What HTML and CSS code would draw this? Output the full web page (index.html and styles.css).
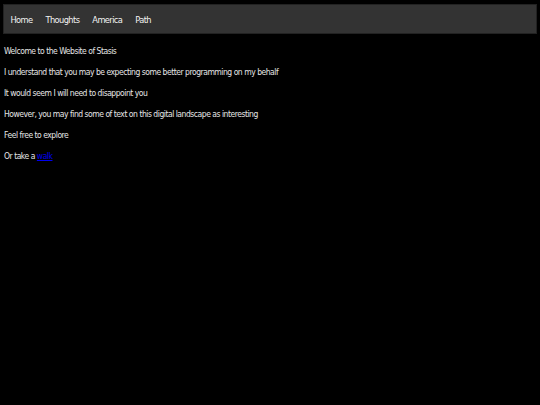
FILE: index.html
```html
<!DOCTYPE html>
<html lang="en">
<head>
    <meta charset="UTF-8">
    <meta name="viewport" content="width=device-width, initial-scale=1.0">
    <title>Stasis</title>
    <link rel="stylesheet" href="styles.css">
</head>
<body>
    <!-- Навигация -->
    <nav class="topnav">
        <a href="#">Home</a>
        <a href="#">Thoughts</a>
        <a href="#">America</a>
        <a href="#">Path</a>
    </nav>

    <div class="content">
        <p>Welcome to the Website of Stasis</p>
        <p>I understand that you may be expecting some better programming on my behalf</p>
        <p>It would seem I will need to disappoint you</p>
        <p>However, you may find some of text on this digital landscape as interesting</p>
        <p>Feel free to explore</p>
        <p>Or take a <a href="#" class="walk">walk</a></p>
    </div>
</body>
</html>
```

FILE: styles.css
```css
body {
    margin: 0;
    padding: 4px 3px;
    background-color: #000;
    color: #e6e6e6;
    font-family: 'DejaVu Sans Condensed', 'DejaVu Sans', sans-serif;
    font-size: 8.5px;
    letter-spacing: -0.48px;
}

.topnav {
    display: flex;
    background-color: #333;
    border: 1px solid #222;
    padding: 0;
    height: 28px;
    align-items: center;
}

.topnav a {
    color: #f2f2f2;
    text-decoration: none;
    font-size: 9.2px;
    letter-spacing: -0.6px;
    padding: 0 6.5px;
}

.content {
    padding-top: 7px;
}

.content p {
    margin: 0;
    padding: 0 1px;
    line-height: 21px;
}

.walk {
    color: #0000ee;
}
```
